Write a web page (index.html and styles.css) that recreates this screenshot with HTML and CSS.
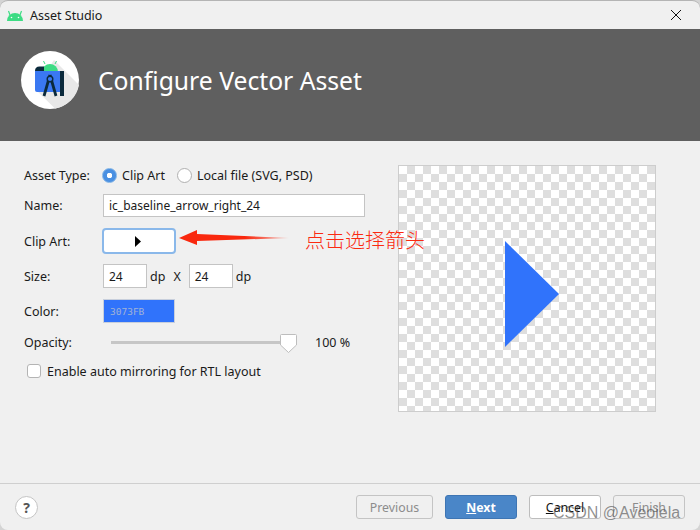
FILE: index.html
```html
<!DOCTYPE html>
<html lang="en">
<head>
<meta charset="utf-8">
<title>Asset Studio</title>
<link rel="stylesheet" href="styles.css">
</head>
<body>
<div class="window">
  <div class="titlebar">
    <svg class="title-icon" width="16" height="11" viewBox="0 0 16 11"><path d="M0 11a8 8 0 0 1 16 0z" fill="#3ddc84"/><path d="M3 5 1.500 1M13 5l1.500-4" stroke="#3ddc84" stroke-width="1.200"/><circle cx="4.500" cy="7.500" r=".8" fill="#fff"/><circle cx="11.500" cy="7.500" r=".8" fill="#fff"/></svg>
    <span class="title-text">Asset Studio</span>
    <svg class="close" width="10" height="10" viewBox="0 0 10 10"><path d="M0 0l10 10M10 0 0 10" stroke="#111" stroke-width="1"/></svg>
  </div>
  <header class="header">
    <svg class="logo" width="58" height="58" viewBox="0 0 58 58">
      <circle cx="29" cy="29" r="29" fill="#fff"/>
      <path d="M33 9 58 34A29 29 0 0 1 34 57.500L14 38z" fill="#e8e8e8"/>
      <path d="M24 13 22.500 10M34 13l1.500-3" stroke="#3ddc84" stroke-width="1"/>
      <path d="M21 21a8 8 0 0 1 16 0z" fill="#3ddc84"/>
      <path d="M14 20q0-4.500 4.500-4.500H23V20z" fill="#0b2a3c"/>
      <path d="M14 20h27.500q1.500 0 1.500 1.500V41H16q-2 0-2-2z" fill="#3a78f2"/>
      <rect x="39" y="20" width="4" height="25" fill="#0b2a3c"/>
      <path d="M29 24 23 45M29 24l6 21" stroke="#0b2a3c" stroke-width="2.800" fill="none"/>
      <circle cx="29" cy="28" r="2.800" fill="#3a78f2" stroke="#0b2a3c" stroke-width="1.400"/>
    </svg>
    <h1 class="header-title">Configure Vector Asset</h1>
  </header>
  <main class="main">
    <form class="form">
      <div class="row">
        <span class="label">Asset Type:</span>
        <span class="radio radio-on"></span><span class="radio-text">Clip Art</span>
        <span class="radio radio-off"></span><span class="radio-text">Local file (SVG, PSD)</span>
      </div>
      <div class="row row-name">
        <span class="label">Name:</span>
        <span class="input input-name">ic_baseline_arrow_right_24</span>
      </div>
      <div class="row row-clip">
        <span class="label">Clip Art:</span>
        <span class="clip-button"><svg width="6" height="11" viewBox="0 0 6 11"><path d="M0 0l6 5.500L0 11z" fill="#000"/></svg></span>
      </div>
      <div class="row row-size">
        <span class="label">Size:</span>
        <span class="input input-size">24</span>
        <span class="unit">dp</span>
        <span class="times">X</span>
        <span class="input input-size">24</span>
        <span class="unit">dp</span>
      </div>
      <div class="row row-color">
        <span class="label">Color:</span>
        <span class="color-box">3073FB</span>
      </div>
      <div class="row row-opacity">
        <span class="label label-opacity">Opacity:</span>
        <span class="slider">
          <svg class="thumb" width="17" height="19" viewBox="0 0 17 19"><path d="M1.500.5h14q1 0 1 1V11l-8 7.500L.5 11V1.500q0-1 1-1z" fill="#fff" stroke="#bdbdbd"/></svg>
        </span>
        <span class="percent">100 %</span>
      </div>
      <div class="row row-check">
        <span class="checkbox"></span>
        <span>Enable auto mirroring for RTL layout</span>
      </div>
    </form>
    <div class="preview">
      <svg width="256" height="244" viewBox="0 0 256 244"><path d="M106 75l54 53-54 53z" fill="#3073fb"/></svg>
    </div>
  </main>
  <footer class="footer">
    <span class="help">?</span>
    <div class="buttons">
      <span class="btn btn-prev btn-disabled">Previous</span>
      <span class="btn btn-next"><u>N</u>ext</span>
      <span class="btn btn-cancel"><u>C</u>ancel</span>
      <span class="btn btn-disabled">Finish</span>
    </div>
  </footer>
</div>
<svg class="red-arrow" width="112" height="18" viewBox="0 0 112 18">
  <defs><linearGradient id="fade" x1="0" x2="1" y1="0" y2="0"><stop offset="0" stop-color="#f9280e"/><stop offset=".6" stop-color="#f9280e"/><stop offset="1" stop-color="#f9280e" stop-opacity=".25"/></linearGradient></defs>
  <path d="M1 9 19 1v4l92 4-92 3v4z" fill="url(#fade)"/>
</svg>
<span class="note">点击选择箭头</span>
<span class="watermark">CSDN @Aveoiela</span>
</body>
</html>
```
FILE: styles.css
```css
* { box-sizing: border-box; }
html, body { margin: 0; height: 100%; }
body {
  position: relative;
  width: 700px;
  height: 530px;
  overflow: hidden;
  background: #d4d4d4;
  font-family: "Noto Sans", "Noto Sans CJK SC", sans-serif;
  font-size: 12.5px;
  color: #1a1a1a;
}
.window {
  display: flex;
  flex-direction: column;
  width: 700px;
  height: 530px;
  background: #f0f0f0;
  border-top: 1px solid #b4b4b4;
  border-radius: 8px;
  overflow: hidden;
}
.titlebar {
  display: flex;
  align-items: center;
  height: 28px;
  padding: 0 19px 0 7px;
}
.title-icon { margin-right: 7px; }
.title-text { flex: 1; }
.header {
  display: flex;
  align-items: center;
  height: 112px;
  padding: 0 0 10px 21px;
  background: #5f5f5f;
}
.logo { margin-right: 19px; }
.header-title {
  margin: 0;
  font-size: 24.7px;
  font-weight: 400;
  color: #fff;
}
.main {
  display: flex;
  flex: 1;
}
.form {
  width: 398px;
  padding: 22px 0 0 24px;
}
.row {
  display: flex;
  align-items: center;
  height: 24px;
}
.label { width: 79px; flex: none; }
.radio {
  width: 15px;
  height: 15px;
  flex: none;
  border-radius: 50%;
  margin-right: 5px;
}
.radio-on {
  margin-left: -1px;
  border: 1px solid #7fb2e6;
  background: radial-gradient(circle, #fff 0 2.500px, #4a90e2 3px);
}
.radio-off {
  background: #fff;
  border: 1px solid #b0b0b0;
}
.radio-text { margin-right: 12px; }
.input {
  display: flex;
  align-items: center;
  height: 100%;
  padding-left: 5px;
  background: #fff;
  border: 1px solid #c4c4c4;
  font-size: 12px;
}
.row-name { height: 23px; margin-top: 7px; }
.input-name { width: 262px; }
.row-clip { height: 26px; margin-top: 11px; }
.clip-button {
  display: flex;
  align-items: center;
  justify-content: center;
  width: 74px;
  height: 26px;
  margin-left: -1px;
  padding-right: 2px;
  background: #fff;
  border: 2px solid #8ab8ea;
  border-radius: 4px;
}
.row-size { margin-top: 10px; }
.input-size { width: 44px; }
.unit { margin: 0 3px; }
.times { margin: 0 8px 0 5px; }
.row-color { margin-top: 11px; }
.color-box {
  display: flex;
  align-items: center;
  width: 72px;
  height: 100%;
  padding-left: 6px;
  background: #3073fb;
  border: 1px solid #c8cfdc;
  font-family: "DejaVu Sans Mono", monospace;
  font-size: 9.5px;
  color: #a0b2d6;
}
.row-opacity { margin-top: 7px; }
.label-opacity { width: 87px; }
.slider {
  position: relative;
  width: 179px;
  height: 3px;
  background: #c6c6c6;
}
.thumb {
  position: absolute;
  top: -7px;
  right: -7px;
}
.percent { margin-left: 25px; }
.row-check { margin-top: 5px; padding-left: 3px; }
.checkbox {
  width: 14px;
  height: 14px;
  margin-right: 6px;
  background: #fff;
  border: 1px solid #b4b4b4;
  border-radius: 3px;
}
.preview {
  width: 258px;
  height: 247px;
  margin-top: 24px;
  border: 1px solid #cdcdcd;
  background: repeating-conic-gradient(#dedede 0 25%, #fff 0 50%) 0 0 / 16px 16px;
}
.preview svg { display: block; }
.footer {
  display: flex;
  align-items: center;
  justify-content: space-between;
  height: 47px;
  padding: 0 15px;
  border-top: 1px solid #cfcfcf;
}
.help {
  display: flex;
  align-items: center;
  justify-content: center;
  width: 23px;
  height: 23px;
  background: #fff;
  border: 1px solid #c4c4c4;
  border-radius: 50%;
  font-size: 14px;
  font-weight: 700;
  color: #555;
}
.buttons { display: flex; gap: 12px; }
.btn {
  display: flex;
  align-items: center;
  justify-content: center;
  width: 72px;
  height: 24px;
  border: 1px solid #c4c4c4;
  border-radius: 3px;
  font-size: 12.3px;
}
.btn-prev { width: 77px; }
.btn-disabled { color: #8c8c8c; }
.btn-next {
  background: #4a86c8;
  border-color: #3e75b3;
  color: #fff;
  font-weight: 700;
}
.btn-cancel { background: #fff; border-color: #bdbdbd; color: #111; }
.red-arrow {
  position: absolute;
  left: 178px;
  top: 229px;
}
.note {
  position: absolute;
  left: 305px;
  top: 226px;
  font-family: "Noto Sans CJK SC", sans-serif;
  font-size: 20px;
  font-weight: 300;
  line-height: 28px;
  color: #fb2a10;
}
.watermark {
  position: absolute;
  left: 553px;
  top: 501px;
  font-family: "Liberation Sans", sans-serif;
  font-size: 16px;
  line-height: 24px;
  color: rgba(70, 70, 70, 0.6);
}
```
